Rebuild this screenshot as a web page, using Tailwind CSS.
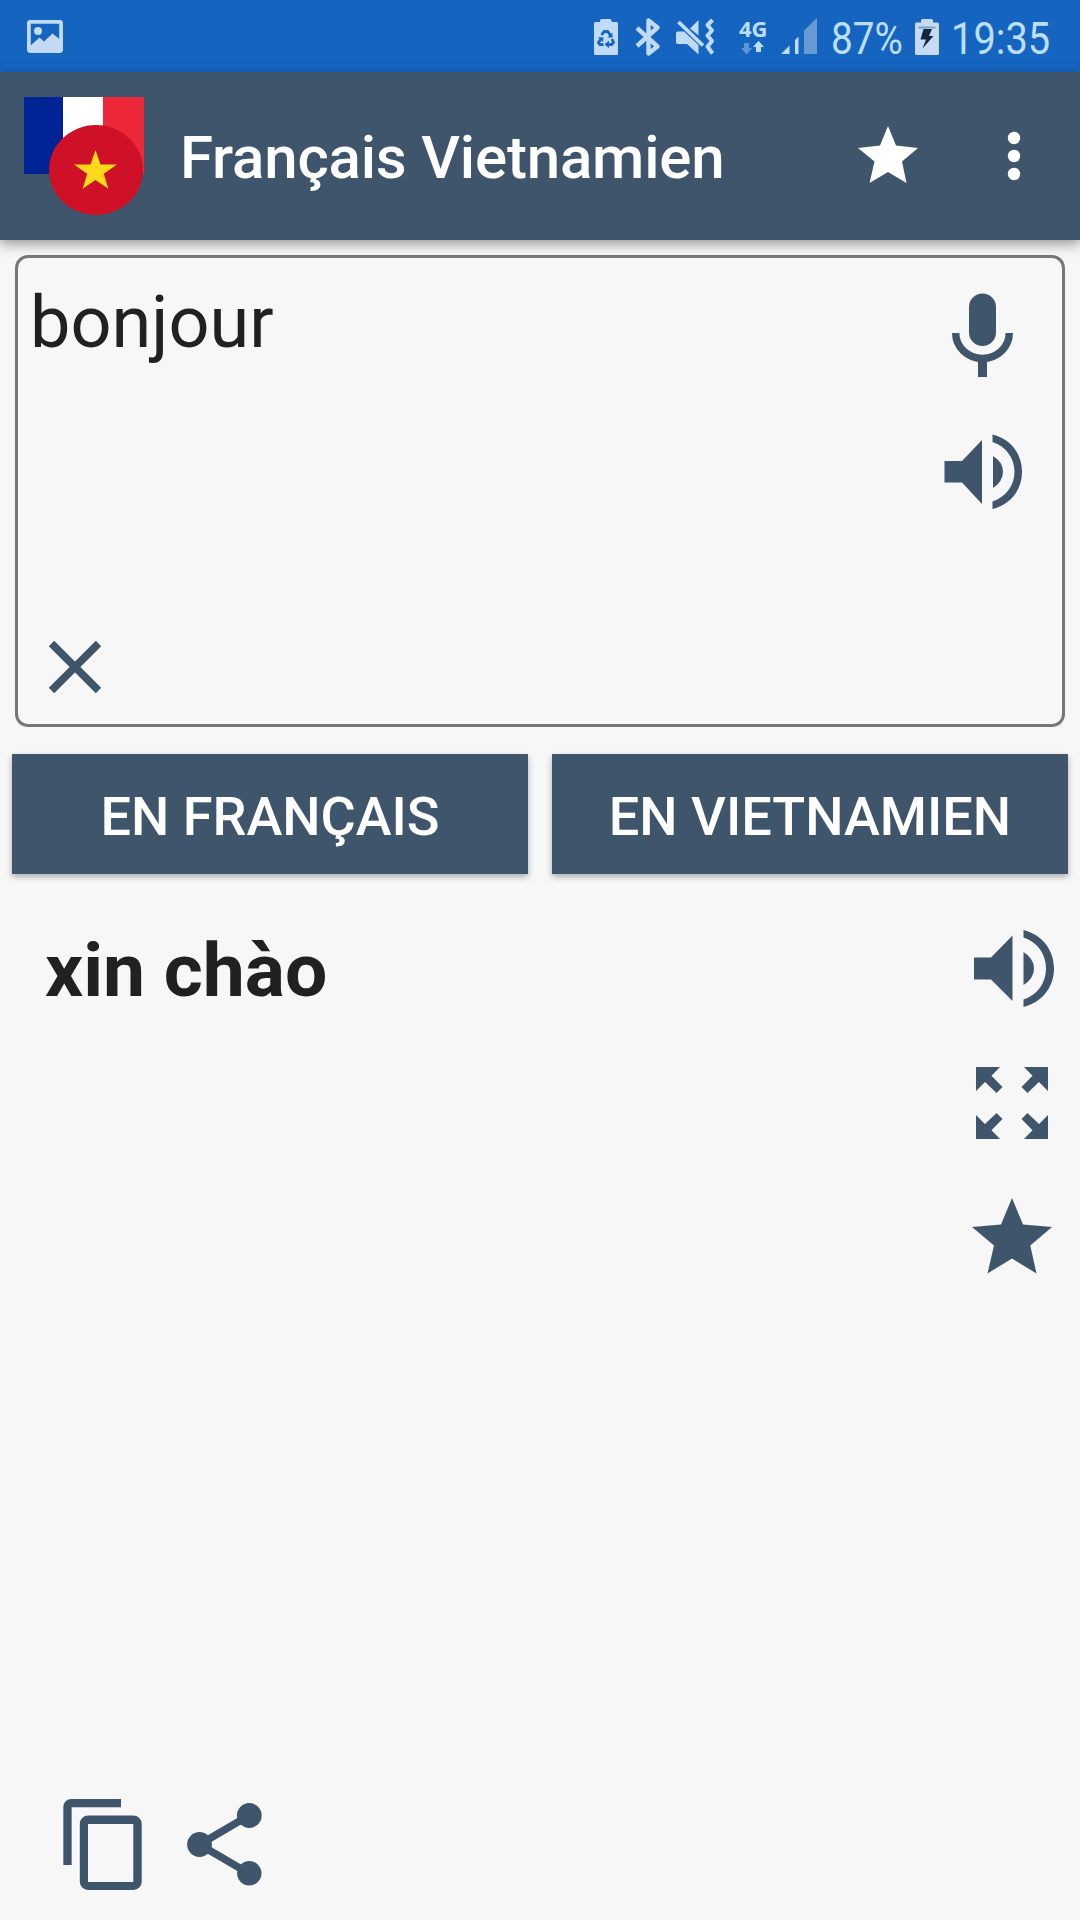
<!DOCTYPE html>
<html lang="fr">
<head>
<meta charset="utf-8">
<title>Français Vietnamien</title>
<script src="https://cdn.jsdelivr.net/npm/@tailwindcss/browser@4"></script>
</head>
<body class="bg-[#f7f7f7]">
<div class="flex h-[1920px] w-[1080px] flex-col overflow-hidden bg-[#f7f7f7] font-['Roboto',sans-serif] text-[#212121]">

  <!-- Status bar -->
  <div class="flex h-[72px] shrink-0 items-start bg-[#1565c0] text-[#bbdefb]">
    <svg class="ml-[24px] h-[72px] w-[42px]" viewBox="24 0 42 72">
      <rect x="28.900" y="21.900" width="32.200" height="29.200" rx="1.500" fill="none" stroke="#bfdbf8" stroke-width="3.800"/>
      <circle cx="38" cy="31" r="4" fill="#bfdbf8"/>
      <path d="M30 46L39.500 37.500L44 41.500L52.500 33.500L60 39.500V51H30Z" fill="#c4d9f2"/>
    </svg>
    <svg class="ml-[524px] h-[72px] w-[32px]" viewBox="590 0 32 72">
      <path d="M594 23.500Q594 22 595.500 22H600V20.500Q600 19 601.500 19H610Q611.500 19 611.500 20.500V22H616.500Q618 22 618 23.500V53.500Q618 55 616.500 55H595.500Q594 55 594 53.500Z" fill="#bfdbf8"/>
      <g fill="none" stroke="#1565c0" stroke-width="2.800">
        <path d="M601.500 35L604.300 31.500H607.700L610.500 35.500"/>
        <path d="M612 39L613.500 42.500L611.500 44.700H606.500"/>
        <path d="M603.500 44.700H600L598.500 42.500L601.300 38.500"/>
      </g>
      <path d="M612.500 32.500V37.500H607.500ZM609 40.500V48L604.500 44.500ZM598 37L603.500 37.500L603 42Z" fill="#1565c0"/>
    </svg>
    <svg class="ml-[10px] h-[72px] w-[32px]" viewBox="632 0 32 72">
      <path d="M637 28L657.500 46.500L648.500 53.500V20.500L657.500 27.500L637 46" fill="none" stroke="#bfdbf8" stroke-width="4.400" stroke-linejoin="round"/>
    </svg>
    <svg class="ml-[10px] h-[72px] w-[44px]" viewBox="674 0 44 72">
      <path d="M690 28.500L698.500 20V35.500Z" fill="#bfdbf8"/>
      <path d="M676 33.500Q676 31.500 678 31.500H684L698.500 45V54.500L687 44H678Q676 44 676 42Z" fill="#bfdbf8"/>
      <path d="M678.500 22L703 45.500" stroke="#bfdbf8" stroke-width="3.800"/>
      <path d="M712.500 20L707.500 25L712 30.500L707.500 35.500L712 41L707.500 46.500L712.500 53.500" fill="none" stroke="#bfdbf8" stroke-width="4" stroke-linejoin="round"/>
    </svg>
    <div class="ml-[20px] flex w-[32px] flex-col pt-[16px]">
      <span class="pl-[1px] font-['Open_Sans'] text-[22px] font-bold leading-[24px]">4G</span>
      <svg class="h-[16px] w-[32px]" viewBox="738 40 32 16">
        <path d="M744 43H749V48H752L746.500 54.500L741 48H744Z" fill="#5c95d8"/>
        <path d="M756 52H761V47H764L758.500 40.800L753 47H756Z" fill="#bbdefb"/>
      </svg>
    </div>
    <svg class="ml-[8px] h-[72px] w-[42px]" viewBox="778 0 42 72">
      <path d="M781 54L789.500 45.500V54ZM795 40L798.500 36.500V54H795Z" fill="#bfdbf8"/>
      <path d="M804 30.500L817 18V54H804Z" fill="#6a9ad4"/>
    </svg>
    <span class="ml-[11px] block w-[76px] origin-left scale-x-[0.86] pt-[6px] text-[45px] leading-[66px]">87%</span>
    <svg class="ml-[5px] h-[72px] w-[30px]" viewBox="912 0 30 72">
      <path d="M915 24Q915 22.500 916.500 22.500H921V20.500Q921 19 922.500 19H931.500Q933 19 933 20.500V22.500H937.500Q939 22.500 939 24V53.500Q939 55 937.500 55H916.500Q915 55 915 53.500Z" fill="#c7daf3"/>
      <path d="M918.500 27.500H935.500" stroke="#7ea3bd" stroke-width="2"/>
      <path d="M923.500 29H932L929 36H933.500L922.500 48.500L926 39.500H920.500Z" fill="#12283f"/>
    </svg>
    <span class="ml-[9px] block w-[110px] origin-left scale-x-[0.885] pt-[6px] text-[45px] leading-[66px]">19:35</span>
  </div>

  <!-- App bar -->
  <header class="z-10 flex h-[168px] shrink-0 items-start bg-[#3f556c] text-white shadow-[0_4px_12px_rgba(0,0,0,0.4)]">
    <svg class="ml-[24px] mt-[24px] size-[120px]" viewBox="24 96 120 120">
      <path d="M24 97H63V174H24Z" fill="#002395"/>
      <path d="M63 97H103V174H63Z" fill="#fff"/>
      <path d="M103 97H144V174H103Z" fill="#ed2939"/>
      <ellipse cx="96" cy="170" rx="47" ry="45" fill="#ce1126"/>
      <path d="M95.500 150L100.500 164.500H117L103.800 173.800L108.300 188.800L95.500 180L82.700 188.800L87.200 173.800L74 164.500H90.500Z" fill="#ffd91a"/>
    </svg>
    <h1 class="ml-[36px] w-[660px] whitespace-nowrap pt-[2px] text-[60px] font-medium leading-[168px] tracking-[-0.18px]">Français Vietnamien</h1>
    <svg class="ml-[12px] mt-[48px] h-[72px] w-[72px]" viewBox="852 120 72 72">
      <path d="M888 126L896 145.500L918 148L902 161.500L906.500 183L888 172L869.500 183L874.500 161.500L858 148L880 145.500Z" fill="#fff"/>
    </svg>
    <svg class="ml-[66px] mt-[48px] h-[72px] w-[48px]" viewBox="990 120 48 72">
      <circle cx="1014" cy="138" r="6.200" fill="#fff"/><circle cx="1014" cy="156" r="6.200" fill="#fff"/><circle cx="1014" cy="174" r="6.200" fill="#fff"/>
    </svg>
  </header>

  <!-- Source text -->
  <section class="mx-[15px] mt-[15px] flex h-[472px] shrink-0 justify-between rounded-[13px] border-[3px] border-[#777]">
    <div class="flex flex-col justify-between">
      <p class="pl-[12px] pt-[23px] text-[72px] leading-[84px]">bonjour</p>
      <svg class="mb-[21px] ml-[21px] size-[72px]" viewBox="39 631 72 72">
        <path d="M51.500 643.500L98.500 690.500M98.500 643.500L51.500 690.500" stroke="#3f556c" stroke-width="7.600"/>
      </svg>
    </div>
    <div class="flex flex-col pr-[30px] pt-[22px]">
      <svg class="h-[110px] w-[96px]" viewBox="936 280 96 110">
        <rect x="969" y="293.500" width="27" height="52.500" rx="13.500" fill="#3f556c"/>
        <path d="M955.700 333A26.800 25.500 0 0 0 1009.300 333" fill="none" stroke="#3f556c" stroke-width="7.400"/>
        <path d="M978 360H987V377H978Z" fill="#3f556c"/>
      </svg>
      <svg class="mt-[30px] h-[104px] w-[96px]" viewBox="936 420 96 104">
        <g fill="#3f556c">
          <path d="M944.500 461H962L982 440V504L962 482.500H944.500Z"/>
          <path d="M993 456Q1003 462 1003 471.800Q1003 481.500 993 488Z"/>
          <path d="M992.500 434.500C1011 439 1022 454 1022 471.800C1022 489.500 1011 504.500 992.500 509V501.500C1006 497 1014.500 485.500 1014.500 471.800C1014.500 458 1006 446.500 992.500 442Z"/>
        </g>
      </svg>
    </div>
  </section>

  <!-- Language buttons -->
  <div class="mx-3 mt-[27px] grid h-[120px] shrink-0 grid-cols-2 gap-6 text-center text-[54px] font-medium leading-[120px] text-white">
    <button class="bg-[#3f556c] pt-[5px] leading-[115px] shadow-[0_3px_6px_rgba(0,0,0,0.3)]">EN FRANÇAIS</button>
    <button class="bg-[#3f556c] pt-[5px] leading-[115px] shadow-[0_3px_6px_rgba(0,0,0,0.3)]">EN VIETNAMIEN</button>
  </div>

  <!-- Translation -->
  <section class="flex grow justify-between">
    <p class="pl-[45px] pt-[52px] text-[75px] font-bold leading-[88px]">xin chào</p>
    <div class="flex flex-col pr-[20px] pt-[46px]">
      <svg class="h-[100px] w-[96px]" viewBox="964 920 96 100">
        <g fill="#3f556c">
          <path d="M974 957.500H991L1012.500 935.500V1001L991 979.500H974Z"/>
          <path d="M1023.500 952Q1034 958.500 1034 968.500Q1034 978.500 1023.500 985Z"/>
          <path d="M1023.500 930C1042 934.500 1054 950 1054 968.500C1054 987 1042 1002.500 1023.500 1007V999.500C1037.500 995 1046 983 1046 968.500C1046 954 1037.500 942 1023.500 937.500Z"/>
        </g>
      </svg>
      <svg class="mt-[30px] h-[106px] w-[96px]" viewBox="964 1050 96 106">
        <g fill="#3f556c">
          <path d="M976 1067H1000L991.500 1075.700L1002.500 1087L996.500 1093L985 1082L976 1091Z"/>
          <path d="M1048 1067H1024L1032.500 1075.700L1021.500 1087L1027.500 1093L1039 1082L1048 1091Z"/>
          <path d="M976 1139H1000L991.500 1130.300L1002.500 1119L996.500 1113L985 1124L976 1115Z"/>
          <path d="M1048 1139H1024L1032.500 1130.300L1021.500 1119L1027.500 1113L1039 1124L1048 1115Z"/>
        </g>
      </svg>
      <svg class="mt-[30px] h-[100px] w-[96px]" viewBox="964 1186 96 100">
        <path d="M1012 1198L1023 1224.500L1052 1227L1030.300 1245.500L1036.500 1273.500L1012 1258.500L987.500 1273.500L994 1245.500L972 1227L1001 1224.500Z" fill="#3f556c"/>
      </svg>
    </div>
  </section>

  <!-- Actions -->
  <footer class="flex h-[140px] shrink-0 pl-[54px]">
    <svg class="h-[140px] w-[100px]" viewBox="54 1780 100 140">
      <path d="M67.500 1865V1807Q67.500 1803.200 71.500 1803.200H121" fill="none" stroke="#3f556c" stroke-width="8.300"/>
      <path d="M88 1815.500H133.500A8.200 8.200 0 0 1 141.700 1823.700V1881.800A8.200 8.200 0 0 1 133.500 1890H88A8.200 8.200 0 0 1 79.800 1881.800V1823.700A8.200 8.200 0 0 1 88 1815.500ZM88 1824V1882H133.300V1824Z" fill="#3f556c" fill-rule="evenodd"/>
    </svg>
    <svg class="ml-[26px] h-[140px] w-[90px]" viewBox="180 1780 90 140">
      <path d="M249 1815.500L199.500 1844.500L249 1873.500" fill="none" stroke="#3f556c" stroke-width="7.500"/>
      <g fill="#3f556c"><circle cx="199.500" cy="1844.500" r="12.400"/><circle cx="249.300" cy="1815.500" r="12.400"/><circle cx="249.300" cy="1873.300" r="12.200"/></g>
    </svg>
  </footer>
</div>
</body>
</html>
